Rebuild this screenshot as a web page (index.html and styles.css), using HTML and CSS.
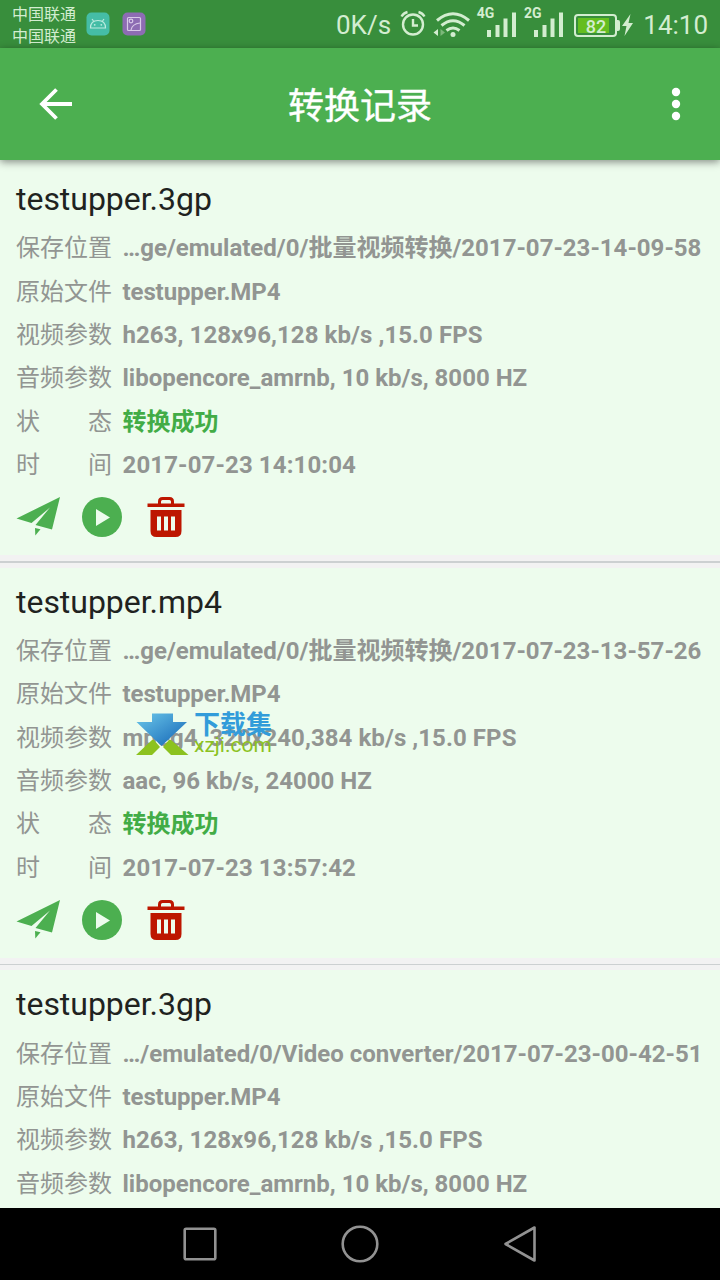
FILE: index.html
```html
<!DOCTYPE html>
<html lang="zh-CN">
<head>
<meta charset="utf-8">
<title>转换记录</title>
<link rel="stylesheet" href="styles.css">
</head>
<body>
<svg class="defs" aria-hidden="true">
  <symbol id="i-send" viewBox="0 0 44 40">
    <path d="M.5 21.500 44 0 36 32.500 19.500 28 34 10.500 15.500 26z" fill="#4caf50"/>
    <path d="M19 31 24.500 32.300 19.300 38.500z" fill="#4caf50"/>
  </symbol>
  <symbol id="i-play" viewBox="0 0 40 40">
    <circle cx="20" cy="20" r="20" fill="#4caf50"/>
    <path d="M14 12v17l14-8.500z" fill="#edfced"/>
  </symbol>
  <symbol id="i-trash" viewBox="0 0 38 42">
    <path d="M12.500 8V5.500q0-3 3-3h7q3 0 3 3V8" fill="none" stroke="#bd1600" stroke-width="3"/>
    <path d="M.5 7.500h37V11H.5zM3.500 14h31v21q0 6-6 6h-19q-6 0-6-6z" fill="#bd1600"/>
    <path d="M10 20.500h4v14h-4zM17 20.500h4v14h-4zM24 20.500h4v14h-4z" fill="#edfced"/>
  </symbol>
</svg>
<div class="screen">
  <header class="status">
    <div class="carriers"><span>中国联通</span><span>中国联通</span></div>
    <svg class="badge" width="24" height="24" viewBox="0 0 24 24"><rect x=".5" y=".5" width="23" height="23" rx="5" fill="#45bda6"/><g fill="none" stroke="#bdece0" stroke-width="1.200"><path d="M4.500 16q0-7.500 7.500-7.500t7.500 7.500zM7.500 9 6 7M16.500 9 18 7"/></g><circle cx="8.700" cy="12.800" r=".9" fill="#bdece0"/><circle cx="15.300" cy="12.800" r=".9" fill="#bdece0"/></svg>
    <svg class="badge badge-last" width="24" height="24" viewBox="0 0 24 24"><rect x=".5" y=".5" width="23" height="23" rx="5" fill="#8d6cb3"/><g fill="none" stroke="#d8c9e8" stroke-width="1.200"><rect x="5.500" y="5.500" width="13" height="13" rx="1"/><circle cx="9" cy="9" r="1.800"/><path d="M9 18q1-6 9-7"/></g></svg>
    <span class="speed">0K/s</span>
    <svg class="alarm" width="26" height="26" viewBox="0 0 26 26" fill="none" stroke="#d3edd0" stroke-width="2.400"><circle cx="13" cy="14.500" r="10"/><path d="M13 9v6.500h5M1.500 6.500Q3.500 3 7.500 2M24.500 6.500Q22.500 3 18.500 2"/></svg>
    <svg class="wifi" width="38" height="28" viewBox="0 0 38 28"><g fill="none" stroke="#d3edd0" stroke-width="3"><path d="M4 9.500q16-13.500 32 0M8.500 14.500q11.500-9.500 23 0M13.500 19.500q6.500-5 13 0"/></g><circle cx="20" cy="23.500" r="2.500" fill="#d3edd0"/><path d="M.5 21.500 5 18v7z" fill="#d3edd0"/><path d="M12 21.500 7.500 18v7z" fill="#7cb87a"/></svg>
    <div class="signal"><span>4G</span><svg width="30" height="26" viewBox="0 0 30 26" fill="#d3edd0"><path d="M0 18h4v7H0zM8.500 13h4v12h-4zM16.500 6.500h4V25h-4zM25 .5h4V25h-4z"/></svg></div>
    <div class="signal signal-2"><span>2G</span><svg width="30" height="26" viewBox="0 0 30 26" fill="#d3edd0"><path d="M0 18h4v7H0zM8.500 13h4v12h-4zM16.500 6.500h4V25h-4zM25 .5h4V25h-4z"/></svg></div>
    <div class="battery"><span>82</span></div>
    <svg class="bolt" width="12" height="22" viewBox="0 0 12 22"><path d="M8.500 0 0 12h4.500L2.500 22 11 9H6.500z" fill="#d3edd0"/></svg>
    <span class="clock">14:10</span>
  </header>
  <nav class="appbar">
    <svg width="34" height="34" viewBox="0 0 34 34" fill="none" stroke="#fff" stroke-width="3.800"><path d="M17.500 2.500 3 17l14.500 14.500M3 17h30"/></svg>
    <h1>转换记录</h1>
    <svg class="more" width="10" height="34" viewBox="0 0 10 34" fill="#fff"><circle cx="5" cy="5" r="4.200"/><circle cx="5" cy="17" r="4.200"/><circle cx="5" cy="29" r="4.200"/></svg>
  </nav>
  <main class="list">
    <article class="record">
      <h2>testupper.3gp</h2>
      <dl>
        <dt>保存位置</dt><dd class="path">…ge/emulated/0/批量视频转换/2017-07-23-14-09-58</dd>
        <dt>原始文件</dt><dd class="file">testupper.MP4</dd>
        <dt>视频参数</dt><dd class="video">h263, 128x96,128 kb/s ,15.0 FPS</dd>
        <dt>音频参数</dt><dd>libopencore_amrnb, 10 kb/s, 8000 HZ</dd>
        <dt class="spread"><span>状</span><span>态</span></dt><dd class="ok">转换成功</dd>
        <dt class="spread"><span>时</span><span>间</span></dt><dd class="time">2017-07-23 14:10:04</dd>
      </dl>
      <div class="actions"><svg width="44" height="40"><use href="#i-send"/></svg><svg width="40" height="40"><use href="#i-play"/></svg><svg width="38" height="42"><use href="#i-trash"/></svg></div>
    </article>
    <article class="record">
      <h2>testupper.mp4</h2>
      <dl>
        <dt>保存位置</dt><dd class="path">…ge/emulated/0/批量视频转换/2017-07-23-13-57-26</dd>
        <dt>原始文件</dt><dd class="file">testupper.MP4</dd>
        <dt>视频参数</dt><dd class="video">mpeg4, 320x240,384 kb/s ,15.0 FPS</dd>
        <dt>音频参数</dt><dd>aac, 96 kb/s, 24000 HZ</dd>
        <dt class="spread"><span>状</span><span>态</span></dt><dd class="ok">转换成功</dd>
        <dt class="spread"><span>时</span><span>间</span></dt><dd class="time">2017-07-23 13:57:42</dd>
      </dl>
      <div class="actions"><svg width="44" height="40"><use href="#i-send"/></svg><svg width="40" height="40"><use href="#i-play"/></svg><svg width="38" height="42"><use href="#i-trash"/></svg></div>
    </article>
    <article class="record">
      <h2>testupper.3gp</h2>
      <dl>
        <dt>保存位置</dt><dd>…/emulated/0/Video converter/2017-07-23-00-42-51</dd>
        <dt>原始文件</dt><dd class="file">testupper.MP4</dd>
        <dt>视频参数</dt><dd class="video">h263, 128x96,128 kb/s ,15.0 FPS</dd>
        <dt>音频参数</dt><dd>libopencore_amrnb, 10 kb/s, 8000 HZ</dd>
      </dl>
    </article>
  </main>
  <footer class="navbar">
    <svg width="40" height="40" viewBox="0 0 40 40"><rect x="4.700" y="4.700" width="30.600" height="30.600" rx="1.500"/></svg>
    <svg width="40" height="40" viewBox="0 0 40 40"><circle cx="20" cy="20" r="17.300"/></svg>
    <svg width="40" height="40" viewBox="0 0 40 40"><path d="M34.500 3.500v33L5.500 20z"/></svg>
  </footer>
  <div class="watermark">
    <svg width="53" height="43" viewBox="0 0 53 43"><defs><linearGradient id="arrow" x1="0" y1="0" x2="1" y2="1"><stop offset="0" stop-color="#6cc8ea"/><stop offset="1" stop-color="#1263b5"/></linearGradient></defs><path d="M0 42 16 27h2l6 7-8 8zM52.500 42 35 27h-2l-6 7 8 8z" fill="#8cc21f"/><path d="M16 .5h21V9h14L25.500 33 .5 9H16z" fill="url(#arrow)"/></svg>
    <div class="brand"><b>下载集</b><span>xzji.com</span></div>
  </div>
</div>
</body>
</html>
```
FILE: styles.css
```css
* { box-sizing: border-box; }
body { margin: 0; background: #000; font-family: Roboto, "Noto Sans CJK SC", sans-serif; }
svg { display: block; flex: none; }
.defs { position: absolute; width: 0; height: 0; }
.screen { position: relative; display: flex; flex-direction: column; width: 720px; height: 1280px; overflow: hidden; }

.status { flex: none; display: flex; height: 48px; padding: 0 12px; background: #388e3c; color: #d3edd0; white-space: nowrap; }
.carriers { display: flex; flex-direction: column; width: 64px; padding-top: 4px; font-size: 16px; line-height: 22px; }
.badge { margin: 12px 0 0 10px; }
.badge-last { margin-left: 12px; }
.speed { width: 64px; margin-left: 190px; font-size: 26px; line-height: 51px; }
.alarm { margin: 10px 0 0 1px; }
.wifi { margin: 11px 0 0 7px; }
.signal { display: flex; width: 41px; margin-left: 6px; }
.signal span { width: 10px; padding-top: 5px; font-size: 14px; line-height: 17px; font-weight: 700; }
.signal svg { margin-top: 12px; }
.signal-2 { margin-left: 7px; }
.battery { display: flex; flex: none; position: relative; width: 43px; height: 23px; margin: 13.500px 0 0 10px; padding: 2px; border: 2px solid #d3edd0; border-radius: 4px; }
.battery span { width: 31px; padding-right: 3px; background: #65bd20; font-size: 18px; font-weight: 500; line-height: 17px; text-align: right; }
.battery::after { content: ""; position: absolute; right: -5px; top: 4px; width: 3px; height: 11px; background: #d3edd0; border-radius: 0 2px 2px 0; }
.bolt { margin: 14px 0 0 5px; }
.clock { margin-left: 9px; font-size: 26px; line-height: 51px; }

.appbar { flex: none; position: relative; z-index: 1; display: flex; justify-content: space-between; align-items: center; height: 112px; padding: 0 39px; background: #4caf50; box-shadow: 0 2px 8px rgba(0, 0, 0, .45); }
.appbar h1 { margin: 0; padding-top: 6px; color: #fff; font-size: 36px; font-weight: 400; line-height: 54px; -webkit-text-stroke: .4px #fff; }
.more { margin: 0 0 0 24px; }

.list { flex: 1; min-height: 0; overflow: hidden; }
.record { height: 402.670px; padding: 17px 16px 0; background: #edfced; }
.record h2 { margin: 0; color: #1f231f; font-size: 32px; line-height: 44px; font-weight: 400; letter-spacing: -.03px; }
.record dl { display: grid; grid-template-columns: 96px 1fr; column-gap: 10.500px; grid-auto-rows: 43.330px; margin: 6.300px 0 0; color: #929592; font-size: 24px; line-height: 43px; white-space: nowrap; }
.record dt { font-weight: 400; }
.record dd { margin: 0; font-weight: 700; }
.record .file { letter-spacing: -.1px; }
.record .video { letter-spacing: .07px; }
.record .time { letter-spacing: .12px; }
.record .spread { display: flex; justify-content: space-between; }
.record .ok { color: #42ac46; }
.actions { display: flex; align-items: center; gap: 22px; height: 42px; margin-top: 9.200px; }
.actions svg:last-child { margin-left: 3px; }
.record:not(:last-child) { background: linear-gradient(#ccd0d1, #ccd0d1) 0 401px / 100% 2px no-repeat, linear-gradient(#f2f2f2, #f2f2f2) 0 395px / 100% 8px no-repeat, #edfced; }
.record + .record { box-shadow: inset 0 5px #f2f2f2; }

.navbar { flex: none; display: flex; justify-content: center; align-items: center; gap: 120px; height: 72px; background: #000; }
.navbar svg { fill: none; stroke: #929292; stroke-width: 2.600; stroke-linejoin: round; }

.watermark { position: absolute; left: 136px; top: 713px; display: flex; }
.brand { display: flex; flex-direction: column; margin-left: 5px; padding-top: 2px; }
.brand b { color: #329cda; font-size: 26px; line-height: 21px; }
.brand span { color: #8cc21f; font-size: 21px; line-height: 18px; }
```
